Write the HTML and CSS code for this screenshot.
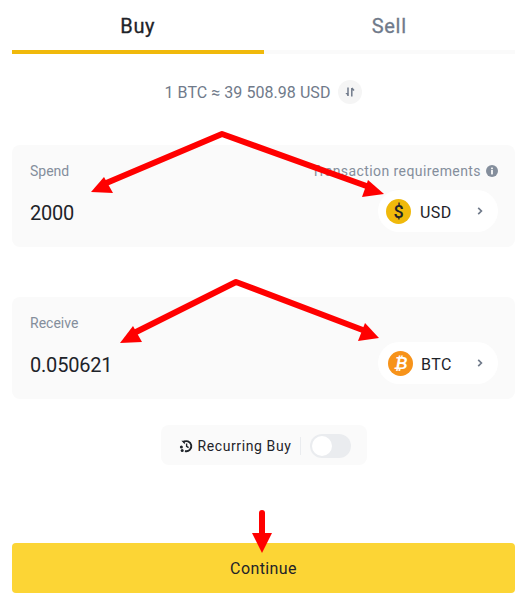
FILE: index.html
```html
<!DOCTYPE html>
<html lang="en">
<head>
<meta charset="utf-8">
<title>Buy BTC</title>
<link rel="stylesheet" href="styles.css">
</head>
<body>
<main class="page">
  <nav class="tabs">
    <div class="tab tab-active">Buy</div>
    <div class="tab">Sell</div>
  </nav>
  <div class="rate">
    <span>1 BTC ≈ 39 508.98 USD</span>
    <span class="swap">
      <svg viewBox="0 0 12 12" width="12" height="12"><path d="M4 1.5v8.5M7.8 10.5V2M7.8 2l2.2 2.6" fill="none" stroke="#707a8a" stroke-width="1.5"/><path d="M1.4 7h2.8v3z" fill="#707a8a"/></svg>
    </span>
  </div>
  <section class="card card-spend">
    <div class="card-top">
      <span class="label">Spend</span>
      <span class="req">Transaction requirements
        <svg viewBox="0 0 12 12" width="12" height="12"><circle cx="6" cy="6" r="6" fill="#848e9c"/><rect x="5.1" y="5" width="1.8" height="4.4" fill="#fafafa"/><rect x="5.1" y="2.6" width="1.8" height="1.6" fill="#fafafa"/></svg>
      </span>
    </div>
    <div class="card-bottom">
      <span class="amount">2000</span>
      <div class="pill">
        <span class="coin coin-usd">$</span>
        <span class="code">USD</span>
        <svg class="chev" viewBox="0 0 8 10" width="8" height="10"><path d="M2.2 1.8 5.4 5 2.2 8.2" fill="none" stroke="#707a8a" stroke-width="1.7"/></svg>
      </div>
    </div>
  </section>
  <section class="card card-receive">
    <div class="card-top">
      <span class="label">Receive</span>
    </div>
    <div class="card-bottom">
      <span class="amount">0.050621</span>
      <div class="pill">
        <span class="coin coin-btc">₿</span>
        <span class="code">BTC</span>
        <svg class="chev" viewBox="0 0 8 10" width="8" height="10"><path d="M2.2 1.8 5.4 5 2.2 8.2" fill="none" stroke="#707a8a" stroke-width="1.7"/></svg>
      </div>
    </div>
  </section>
  <div class="recurring-wrap">
    <div class="recurring">
      <svg viewBox="0 0 14 14" width="14" height="14"><path d="M4.2 3.3A5 5 0 1 1 6 12" fill="none" stroke="#1e2329" stroke-width="1.9"/><path d="M2.4 1.8h3.4v3.4z" fill="#1e2329"/><path d="M7.6 4.4v3l2 1.3" fill="none" stroke="#1e2329" stroke-width="1.4"/><circle cx="2.4" cy="8" r="1.5" fill="#1e2329"/><circle cx="3.2" cy="11.4" r="1.5" fill="#1e2329"/></svg>
      <span class="rec-label">Recurring Buy</span>
      <span class="divider"></span>
      <span class="toggle"><span class="knob"></span></span>
    </div>
  </div>
  <button class="continue" type="button">Continue</button>
</main>
<svg class="annotations" viewBox="0 0 524 600" width="524" height="600">
  <g fill="none" stroke="#ff0000" stroke-width="6" stroke-linejoin="round" stroke-linecap="round">
    <path d="M104 184 222 134 372 188"/>
    <path d="M132 334 236 282 368 332"/>
    <path d="M262 513V536"/>
  </g>
  <g fill="#ff0000">
    <path d="M91 192 104 177 113 193Z"/>
    <path d="M384 194 368 180 362 197Z"/>
    <path d="M120 343 133 326 142 342Z"/>
    <path d="M379 338 365 323 358 341Z"/>
    <path d="M252 533H272L262 553Z"/>
  </g>
</svg>
</body>
</html>
```
FILE: styles.css
```css
* { box-sizing: border-box; }
html, body { margin: 0; padding: 0; background: #fff; }
body { width: 524px; height: 600px; overflow: hidden; position: relative; font-family: Roboto, "Noto Sans", sans-serif; color: #1e2329; }
.page { padding: 0 9px 0 12px; }
.tabs { display: flex; height: 54px; }
.tab { flex: 1; display: flex; justify-content: center; padding-top: 12px; font-size: 20px; font-weight: 400; letter-spacing: 0.7px; line-height: 28px; color: #707a8a; border-bottom: 4px solid #fafafa; -webkit-text-stroke: 0.3px currentColor; }
.tab-active { color: #1e2329; border-bottom-color: #f0b90b; }
.rate { display: flex; justify-content: center; align-items: center; gap: 8px; height: 24px; margin-top: 26px; font-size: 16px; letter-spacing: 0.05px; color: #707a8a; }
.swap { width: 24px; height: 24px; border-radius: 50%; background: #f5f5f5; display: flex; align-items: center; justify-content: center; }
.card { height: 102px; background: #fafafa; border-radius: 8px; padding: 16px 17px 0 18px; }
.card-spend { margin-top: 41px; }
.card-receive { margin-top: 50px; }
.card-top { display: flex; justify-content: space-between; align-items: center; height: 20px; font-size: 14px; color: #848e9c; }
.req { display: flex; align-items: center; gap: 5px; letter-spacing: 0.42px; }
.card-bottom { display: flex; justify-content: space-between; align-items: center; margin-top: 9px; }
.amount { font-size: 20px; line-height: 28px; padding-top: 3px; letter-spacing: -0.2px; color: #1e2329; }
.pill { width: 120px; height: 42px; background: #fff; border-radius: 21px; display: flex; align-items: center; padding: 0 14px 0 8px; }
.coin { width: 25px; height: 25px; border-radius: 50%; display: flex; align-items: center; justify-content: center; font-size: 18px; font-weight: 500; }
.coin-usd { background: #f0b90b; color: #1e2329; }
.coin-btc { margin-left: 2px; background: #f7931a; color: #fff; font-size: 16px; font-weight: 700; font-style: italic; font-family: "DejaVu Sans", sans-serif; }
.code { margin-left: 9px; padding-top: 2px; font-size: 16px; font-weight: 400; letter-spacing: 0.4px; flex: 1; }
.coin-btc + .code { margin-left: 8px; }
.chev { display: block; }
.recurring-wrap { display: flex; justify-content: center; margin-top: 26px; }
.recurring { width: 206px; height: 40px; background: #fafafa; border-radius: 8px; display: flex; align-items: center; padding: 2px 0 0 18px; }
.rec-label { margin-left: 5px; font-size: 14px; font-weight: 400; letter-spacing: 0.6px; color: #1e2329; }
.divider { width: 1px; height: 18px; background: #eaecef; margin-left: 9px; }
.toggle { width: 41px; height: 24px; border-radius: 12px; background: #eaecef; margin-left: 9px; padding: 2px; }
.knob { display: block; width: 20px; height: 20px; border-radius: 50%; background: #fff; }
.continue { display: block; width: 503px; height: 50px; margin-top: 78px; border: 0; border-radius: 4px; background: #fcd535; color: #1e2329; font: 400 16px Roboto, "Noto Sans", sans-serif; letter-spacing: 0.4px; }
.annotations { position: absolute; left: 0; top: 0; pointer-events: none; }
```
